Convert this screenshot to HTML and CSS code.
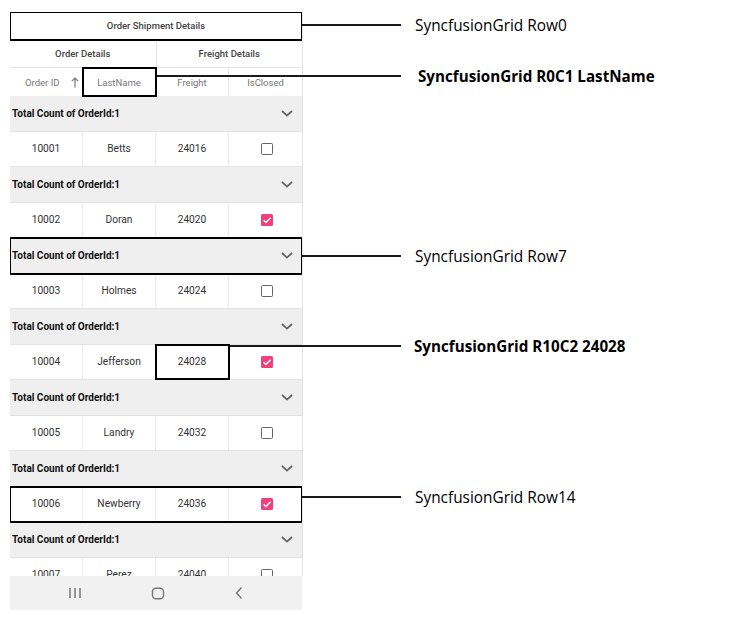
FILE: index.html
```
<!DOCTYPE html>
<html>
<head>
<meta charset="utf-8">
<link rel="stylesheet" href="styles.css">
</head>
<body>
<div class="page">
  <div class="device">
    <div class="grid">
      <div class="hdr-top boxed">Order Shipment Details</div>
      <div class="hdr-stack">
        <div class="hcell span2">Order Details</div>
        <div class="hcell span2">Freight Details</div>
      </div>
      <div class="hdr-cols">
        <div class="ccell sort"><span>Order ID</span><svg class="arrow" width="8" height="11" viewBox="0 0 8 11"><path d="M4 10.5V1M0.8 4.2L4 1L7.2 4.2" fill="none" stroke="#777" stroke-width="1.2"/></svg></div>
        <div class="ccell boxed">LastName</div>
        <div class="ccell">Freight</div>
        <div class="ccell last">IsClosed</div>
      </div>
      <div class="body">
        <div class="group"><span>Total Count of OrderId:1</span><svg class="chev" width="12" height="7" viewBox="0 0 12 7"><path d="M1 1L6 5.6L11 1" fill="none" stroke="#666" stroke-width="1.8"/></svg></div>
        <div class="row"><div class="cell">10001</div><div class="cell">Betts</div><div class="cell">24016</div><div class="cell last"><span class="cb"></span></div></div>
        <div class="group"><span>Total Count of OrderId:1</span><svg class="chev" width="12" height="7" viewBox="0 0 12 7"><path d="M1 1L6 5.6L11 1" fill="none" stroke="#666" stroke-width="1.8"/></svg></div>
        <div class="row"><div class="cell">10002</div><div class="cell">Doran</div><div class="cell">24020</div><div class="cell last"><span class="cb on"><svg width="12" height="12" viewBox="0 0 12 12"><path d="M2.6 6.2L5 8.5L9.6 3.8" fill="none" stroke="#fff" stroke-width="1.5"/></svg></span></div></div>
        <div class="group boxed"><span>Total Count of OrderId:1</span><svg class="chev" width="12" height="7" viewBox="0 0 12 7"><path d="M1 1L6 5.6L11 1" fill="none" stroke="#666" stroke-width="1.8"/></svg></div>
        <div class="row"><div class="cell">10003</div><div class="cell">Holmes</div><div class="cell">24024</div><div class="cell last"><span class="cb"></span></div></div>
        <div class="group"><span>Total Count of OrderId:1</span><svg class="chev" width="12" height="7" viewBox="0 0 12 7"><path d="M1 1L6 5.6L11 1" fill="none" stroke="#666" stroke-width="1.8"/></svg></div>
        <div class="row"><div class="cell">10004</div><div class="cell">Jefferson</div><div class="cell boxed">24028</div><div class="cell last"><span class="cb on"><svg width="12" height="12" viewBox="0 0 12 12"><path d="M2.6 6.2L5 8.5L9.6 3.8" fill="none" stroke="#fff" stroke-width="1.5"/></svg></span></div></div>
        <div class="group"><span>Total Count of OrderId:1</span><svg class="chev" width="12" height="7" viewBox="0 0 12 7"><path d="M1 1L6 5.6L11 1" fill="none" stroke="#666" stroke-width="1.8"/></svg></div>
        <div class="row"><div class="cell">10005</div><div class="cell">Landry</div><div class="cell">24032</div><div class="cell last"><span class="cb"></span></div></div>
        <div class="group"><span>Total Count of OrderId:1</span><svg class="chev" width="12" height="7" viewBox="0 0 12 7"><path d="M1 1L6 5.6L11 1" fill="none" stroke="#666" stroke-width="1.8"/></svg></div>
        <div class="row boxed"><div class="cell">10006</div><div class="cell">Newberry</div><div class="cell">24036</div><div class="cell last"><span class="cb on"><svg width="12" height="12" viewBox="0 0 12 12"><path d="M2.6 6.2L5 8.5L9.6 3.8" fill="none" stroke="#fff" stroke-width="1.5"/></svg></span></div></div>
        <div class="group"><span>Total Count of OrderId:1</span><svg class="chev" width="12" height="7" viewBox="0 0 12 7"><path d="M1 1L6 5.6L11 1" fill="none" stroke="#666" stroke-width="1.8"/></svg></div>
        <div class="row"><div class="cell">10007</div><div class="cell">Perez</div><div class="cell">24040</div><div class="cell last"><span class="cb"></span></div></div>
      </div>
    </div>
    <div class="navbar">
      <svg width="14" height="12" viewBox="0 0 14 12"><path d="M2 1V11M7 1V11M12 1V11" stroke="#777" stroke-width="1.5"/></svg>
      <svg width="14" height="13" viewBox="0 0 14 13"><rect x="1.5" y="1.2" width="11" height="10.6" rx="3.5" fill="none" stroke="#777" stroke-width="1.4"/></svg>
      <svg width="10" height="14" viewBox="0 0 10 14"><path d="M7.5 1.5L2.5 7L7.5 12.5" fill="none" stroke="#777" stroke-width="1.4"/></svg>
    </div>
  </div>

  <div class="callout c-row0"><span class="line"></span><span class="label">SyncfusionGrid Row0</span></div>
  <div class="callout c-r0c1"><span class="line"></span><span class="label bold">SyncfusionGrid R0C1 LastName</span></div>
  <div class="callout c-row7"><span class="line"></span><span class="label">SyncfusionGrid Row7</span></div>
  <div class="callout c-r10c2"><span class="line"></span><span class="label bold">SyncfusionGrid R10C2 24028</span></div>
  <div class="callout c-row14"><span class="line"></span><span class="label">SyncfusionGrid Row14</span></div>
</div>
</body>
</html>
```

FILE: styles.css
```
* { box-sizing: border-box; }
html, body { margin: 0; padding: 0; background: #fff; }
.page {
  position: relative;
  width: 749px;
  height: 620px;
  padding: 12px 0 0 10px;
  font-family: Roboto, "Liberation Sans", sans-serif;
}
.device { width: 293px; }
.grid {
  width: 293px;
  height: 564px;
  overflow: hidden;
  border-right: 1px solid #e4e4e4;
  background: #fff;
}
.boxed { outline: 2px solid #000; outline-offset: -1px; position: relative; z-index: 2; }
.hdr-top {
  height: 28px;
  display: flex; align-items: center; justify-content: center;
  font-size: 9.5px; font-weight: 500; color: #444;
  border-bottom: 1px solid #e4e4e4;
}
.hdr-stack {
  height: 28px;
  display: flex;
  border-bottom: 1px solid #e4e4e4;
}
.hcell {
  flex: 1;
  display: flex; align-items: center; justify-content: center;
  font-size: 9.5px; font-weight: 500; color: #444;
}
.hcell:first-child { border-right: 1px solid #e4e4e4; }
.hdr-cols { height: 28px; display: flex; }
.ccell {
  width: 73px; flex: none;
  display: flex; align-items: center; justify-content: center;
  font-size: 9.5px; color: #777;
  border-right: 1px solid #e8e8e8;
}
.ccell.last { border-right: none; flex: 1; }
.ccell.sort { justify-content: flex-start; padding: 0 3px 0 15px; }
.ccell.sort .arrow { margin-left: auto; }
.group {
  height: 35.5px;
  background: #efefef;
  display: flex; align-items: center; justify-content: space-between;
  padding: 0 9px 0 2px;
  font-size: 10px; font-weight: 700; color: #111;
  border-bottom: 1px solid #e2e2e2;
}
.row {
  height: 35.5px;
  display: flex;
  border-bottom: 1px solid #e4e4e4;
}
.cell {
  width: 73px; flex: none;
  display: flex; align-items: center; justify-content: center;
  font-size: 10.2px; color: #333;
  border-right: 1px solid #ececec;
}
.cell.last { border-right: none; flex: 1; }
.cb {
  width: 12px; height: 12px;
  border: 1.6px solid #666;
  border-radius: 1.5px;
  display: block;
  margin-left: 3px;
}
.cb.on {
  border: none;
  background: #f3407c;
}
.cb.on svg { display: block; }
.navbar {
  height: 34px;
  background: #f1f1f1;
  display: flex; align-items: center; justify-content: space-between;
  padding: 0 58px 0 58px;
  width: 292px;
}
.callout {
  position: absolute;
  display: flex; align-items: center;
  height: 20px;
}
.callout .line {
  display: block;
  height: 2px;
  background: #1a1a1a;
}
.callout .label {
  font-family: "Open Sans", "Noto Sans", sans-serif;
  font-size: 15.4px;
  color: #000;
  white-space: nowrap;
  margin-left: 14px;
}
.callout .label.bold { font-weight: 700; font-size: 15.2px; margin-left: 17px; }
.c-row0 { left: 302px; top: 15px; }
.c-row0 .line { width: 99px; }
.c-r0c1 { left: 155px; top: 66px; }
.c-r0c1 .line { width: 246px; }
.c-row7 { left: 302px; top: 246px; }
.c-row7 .line { width: 99px; }
.c-r10c2 { left: 228px; top: 336px; }
.c-r10c2 .line { width: 173px; }
.c-r10c2 .label.bold { margin-left: 13px; }
.c-row14 { left: 302px; top: 487px; }
.c-row14 .line { width: 99px; }
```
